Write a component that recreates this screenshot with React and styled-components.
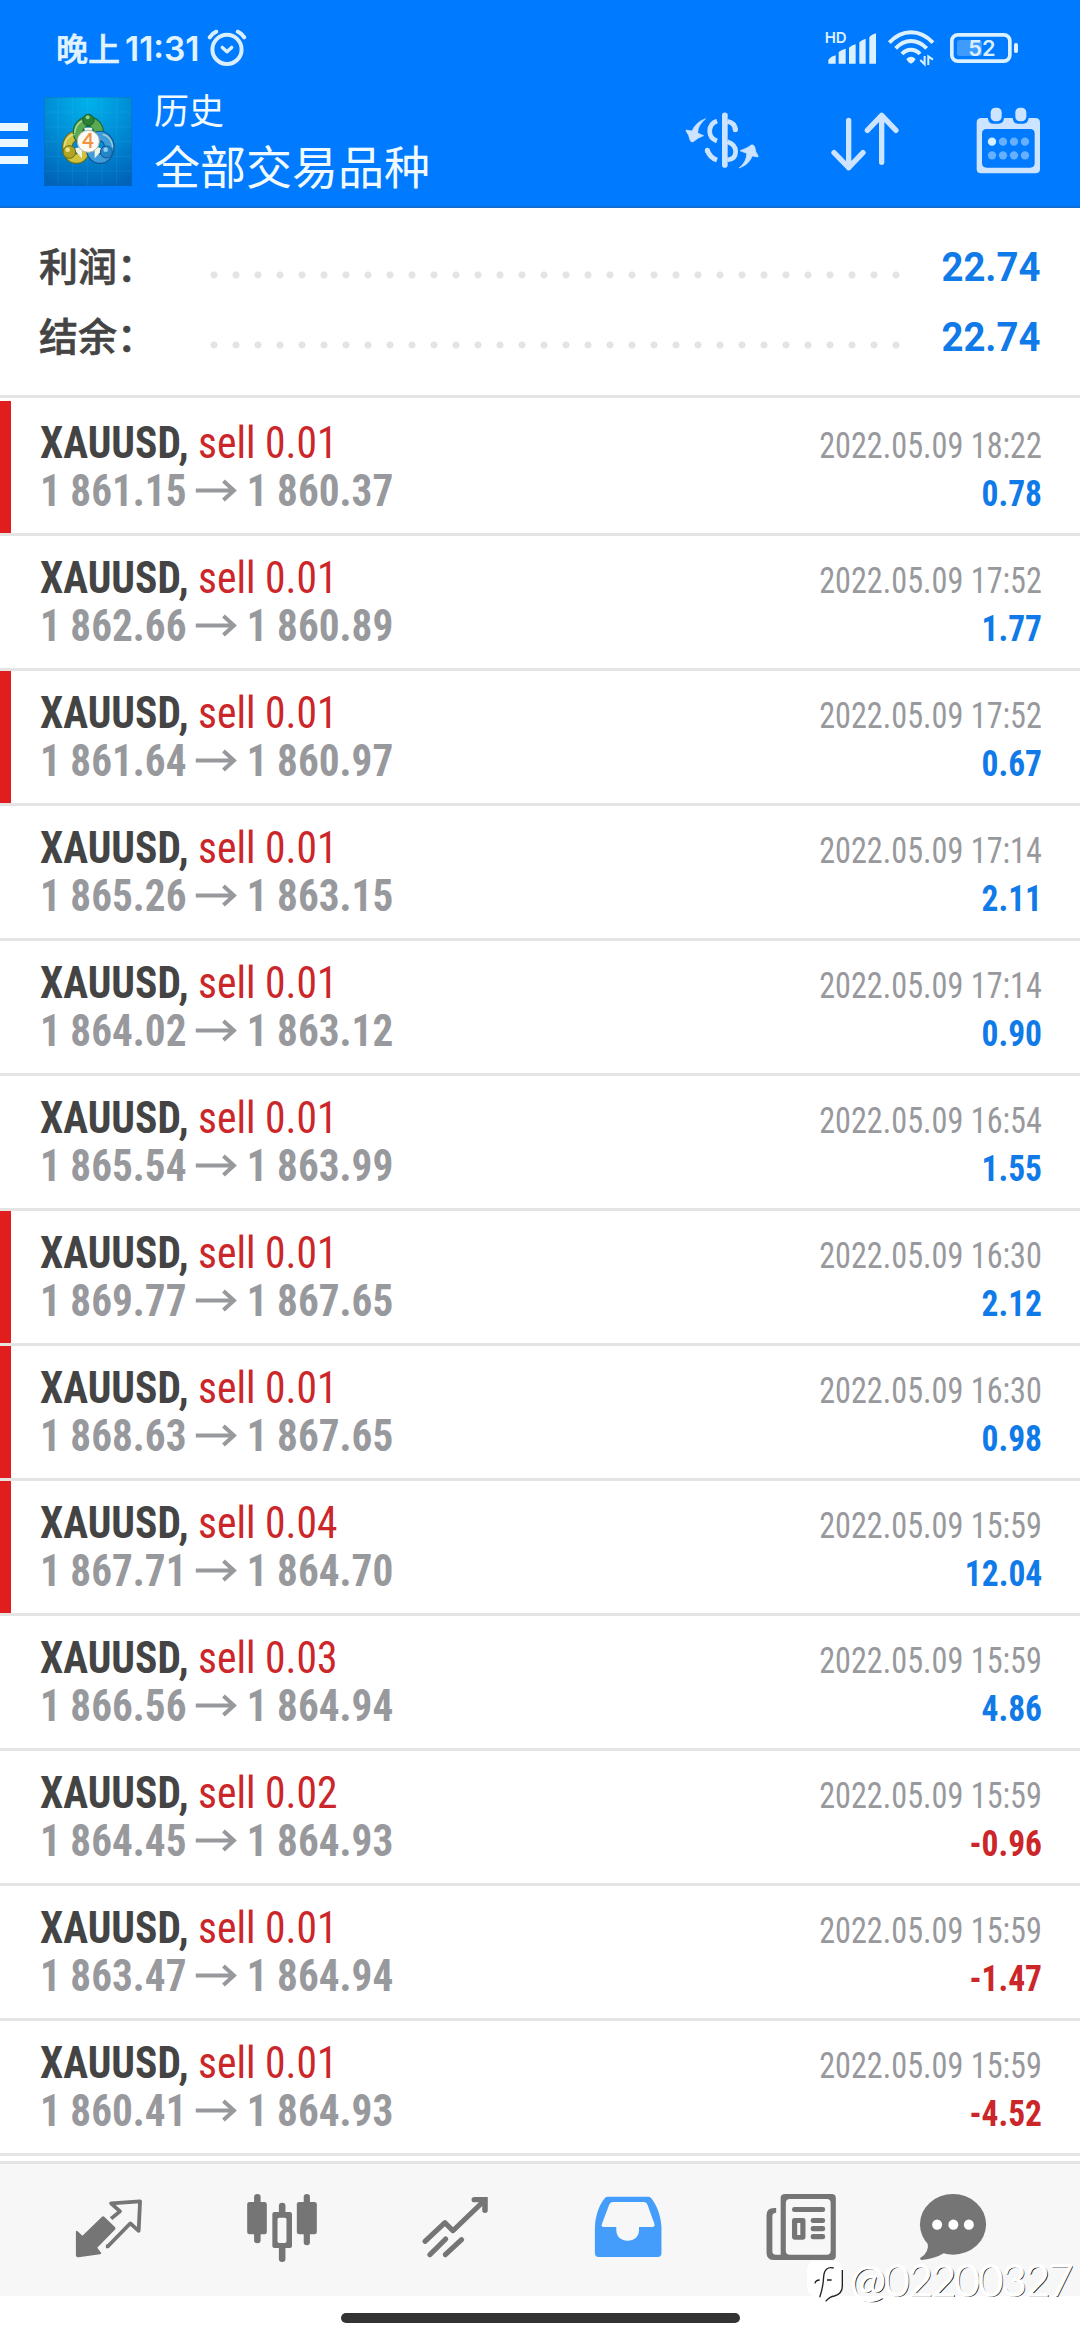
import React from "react";
import styled, { createGlobalStyle } from "styled-components";

const GlobalStyle = createGlobalStyle`
  body {
    margin: 0;
    background: #fff;
  }
`;

const cjk = `"Noto Sans CJK SC", sans-serif`;
const condensed = `"Roboto Condensed", Roboto, sans-serif`;

const Screen = styled.div`
  position: relative;
  width: 1080px;
  height: 2340px;
  overflow: hidden;
  background: #fff;
  font-family: Roboto, ${cjk};

  display: flex;
  flex-flow: column;
`;

const Header = styled.header`
  box-sizing: border-box;
  height: 208px;
  background: #007aff;
  border-bottom: 2px solid #0f6cd2;
`;

const StatusBar = styled.div`
  height: 96px;
  padding: 0 61.5px 0 56px;

  display: flex;
  align-items: center;
`;

const Clock = styled.div`
  margin-top: -1px;
  color: #e0f3ff;

  display: flex;
  align-items: baseline;
`;

const ClockPeriod = styled.span`
  font: 500 32px/48px ${cjk};
  -webkit-text-stroke: 0.6px #e0f3ff;
`;

const ClockTime = styled.span`
  margin-left: 5px;
  font: 600 33.5px/48px Inter, sans-serif;
`;

const StatusIcons = styled.div`
  margin-left: auto;

  display: flex;
  align-items: center;
`;

const StatusIcon = styled.svg`
  display: block;
  overflow: visible;
  width: ${p => p.$w}px;
  height: ${p => p.$h}px;
  margin-left: ${p => p.$gap || 0}px;
  font-family: Inter, sans-serif;
  font-weight: 600;
`;

const AppBar = styled.div`
  height: 90px;
  padding-right: 40px;

  display: flex;
  align-items: center;
`;

const Menu = styled.div`
  width: 27.5px;
  height: 41px;
  margin-top: 4px;

  display: flex;
  flex-flow: column;
  justify-content: space-between;
`;

const MenuBar = styled.span`
  height: 8px;
  background: #eaf7ff;
`;

const Logo = styled.svg`
  display: block;
  width: 88px;
  height: 89px;
  margin-left: 16.5px;
`;

const Titles = styled.div`
  margin: -3px 0 0 22px;
  color: #f1faff;
`;

const Title = styled.div`
  font: 400 35px/50px ${cjk};
`;

const Subtitle = styled.div`
  font: 400 46px/61px ${cjk};
`;

const Actions = styled.div`
  margin: -2px 0 0 auto;

  display: flex;
  align-items: center;
`;

const ActionIcon = styled.svg`
  display: block;
  width: ${p => p.$w}px;
  height: 70px;
  margin-left: ${p => p.$gap || 0}px;
  color: #cce4ff;
`;

const Summary = styled.section`
  padding: 21px 40px 26px 39px;
  border-bottom: 3px solid #e4e4e4;
`;

const SummaryRow = styled.div`
  height: 70px;

  display: flex;
  align-items: center;
`;

const SummaryLabel = styled.div`
  width: 163.5px;
  color: #444;
  font: 500 39px/70px ${cjk};
  -webkit-text-stroke: 0.6px #444;
`;

const DotLeader = styled.div`
  width: 704px;
  height: 8px;
  margin-top: 21px;
  background: radial-gradient(circle at center, #e4e4e4 3.2px, transparent 3.9px) 0 0 / 22px 8px;
`;

/* figures are set a little narrower than the font's own width */
const SummaryValue = styled.div`
  margin-left: auto;
  padding-top: 8px;
  color: #107ae8;
  font: 700 40px/62px Roboto, sans-serif;
  transform: scaleX(0.957);
  transform-origin: right;
`;

const DealList = styled.main`
  padding-top: 3px;
`;

const Deal = styled.div`
  box-sizing: border-box;
  height: 135px;
  border-bottom: 3px solid #e4e4e4;

  display: flex;
`;

const Marker = styled.div`
  width: 11px;
  background: ${p => (p.$on ? "#e11d1d" : "transparent")};
`;

const DealBody = styled.div`
  flex: 1;
  padding: 18px 38px 0 28.5px;
`;

const Line = styled.div`
  height: 48px;
  font: 400 44px/48px ${condensed};

  display: flex;
  align-items: baseline;
  justify-content: space-between;
`;

const Lead = styled.div`
  display: flex;
  align-items: baseline;
  transform: scaleX(${p => p.$scale});
  transform-origin: left;
`;

const DealSymbol = styled.span`
  color: #444;
  font-weight: 700;
  white-space: pre;
`;

const Side = styled.span`
  color: #cb2629;
`;

const Price = styled.span`
  color: #98999d;
  font-weight: 700;
`;

const PriceArrow = styled.svg`
  width: 44.7px;
  height: 24px;
  margin: 0 9.6px 0 10px;
  align-self: center;
  color: #98999d;
`;

const Time = styled.span`
  color: #98999d;
  font-size: 36px;
  transform: scaleX(0.895);
  transform-origin: right;
`;

const Profit = styled.span`
  color: ${p => (p.$loss ? "#cb2629" : "#107ae8")};
  font-size: 36px;
  font-weight: 700;
  transform: scaleX(0.93);
  transform-origin: right;
`;

const TabBar = styled.nav`
  height: 132px;
  margin-top: auto;
  padding-left: 22px;
  background: #f7f7f7;
  border-top: 3px solid #e4e4e4;

  display: grid;
  grid-template-columns: repeat(5, 173px) 131px;
  align-items: center;
  justify-items: center;
`;

const TabIcon = styled.svg`
  display: block;
  width: 80px;
  height: 100px;
  color: ${p => (p.$active ? "#449dfb" : "#757575")};
`;

const HomeArea = styled.div`
  box-sizing: border-box;
  height: 44px;
  padding-top: 17px;

  display: flex;
  justify-content: center;
`;

const HomeIndicator = styled.div`
  width: 399px;
  height: 10px;
  border-radius: 5px;
  background: #333;
`;

const Watermark = styled.div`
  position: absolute;
  right: 8px;
  bottom: 30px;
  color: #fff;
  font: 300 43px/60px Lato, sans-serif;
  letter-spacing: -1.5px;
  -webkit-text-stroke: 1.4px #fff;
  text-shadow: 1.3px 1.3px 0 #222, 0 0 3px #fff, 0 0 2px #fff;

  display: flex;
  align-items: center;
`;

const WatermarkLogo = styled.svg`
  width: 40px;
  height: 44px;
  margin-right: 5px;
`;

const AlarmIcon = () => (
  <StatusIcon $w={40} $h={38} $gap={7} viewBox="0 0 40 38" fill="none" stroke="#d9efff" strokeLinecap="round">
    <circle cx="20" cy="20.4" r="14.6" strokeWidth="4" />
    <path d="M15.3 18.4l4.7 4.4 4.7-4.4" strokeWidth="3.4" strokeLinejoin="round" />
    <path d="M2.7 8.3Q5.3 4.3 9.3 2.7M37.3 8.3Q34.7 4.3 30.7 2.7" strokeWidth="4" />
  </StatusIcon>
);

const SignalIcon = () => (
  <StatusIcon $w={52} $h={40} viewBox="12 22 156 120" fill="#dcf1ff">
    <text x="11" y="68" fontSize="45">HD</text>
    <path d="M22 129V117Q30 107 44 104V129ZM53 129V94Q62 87 74 84V129ZM84 129V81Q92 74 104 71V129ZM115 129V65Q122 57 134 54V129ZM145 129V49Q152 41 165 38V129Z" />
  </StatusIcon>
);

const WifiIcon = () => (
  <StatusIcon $w={49.3} $h={37.33} $gap={10.7} viewBox="200 28 148 112" fill="none" stroke="#dcf1ff">
    <path d="M207 69Q236 38 272 38T338 69" strokeWidth="12" />
    <path d="M226 86Q246 64 272 64T319 86" strokeWidth="12" />
    <path d="M245 103Q256 90 272 90T299 103" strokeWidth="12" />
    <path d="M258 118Q272 105 286 118Q282 128 272 132Q262 128 258 118Z" fill="#dcf1ff" stroke="none" />
    <path d="M313 109V134L300 121M324 136V110L338 120" strokeWidth="6" />
  </StatusIcon>
);

const BatteryIcon = () => (
  <StatusIcon $w={70} $h={32} $gap={12} viewBox="384 33 210 96" fill="#dcf1ff">
    <rect x="408" y="57" width="75" height="48" rx="8" fill="#409bff" />
    <rect x="392.500" y="41.500" width="174" height="79" rx="18" fill="none" stroke="#dcf1ff" strokeWidth="11" />
    <rect x="579" y="66" width="12" height="30" rx="5" />
    <text x="442" y="106" fontSize="65">52</text>
  </StatusIcon>
);

const MetaTraderLogo = () => (
  <Logo viewBox="0 0 264 267" preserveAspectRatio="none">
    <defs>
      <radialGradient id="tile" cx="0.5" cy="0.05" r="1">
        <stop offset="0" stopColor="#00b1ea" />
        <stop offset="0.45" stopColor="#0090d8" />
        <stop offset="1" stopColor="#0063b8" />
      </radialGradient>
    </defs>
    <rect width="264" height="267" fill="url(#tile)" />
    <path
      d="M42 0V267M86 0V267M130 0V267M174 0V267M218 0V267M0 45H264M0 90H264M0 134H264M0 178H264M0 222H264"
      stroke="#5cc8f5"
      strokeOpacity="0.18"
      strokeWidth="2"
    />
    <rect x="1" y="1" width="262" height="265" fill="none" stroke="#0a63b5" strokeOpacity="0.5" strokeWidth="2" />
    <g fill="none">
      <ellipse cx="97" cy="151" rx="27" ry="34" stroke="#66701a" strokeWidth="32" />
      <ellipse cx="97" cy="151" rx="27" ry="34" stroke="#cfc23f" strokeWidth="25" />
      <ellipse cx="133" cy="105" rx="31" ry="31" stroke="#1c6a35" strokeWidth="32" />
      <ellipse cx="133" cy="105" rx="31" ry="31" stroke="#5aaa52" strokeWidth="25" />
      <ellipse cx="168" cy="151" rx="28" ry="34" stroke="#0f5794" strokeWidth="32" />
      <ellipse cx="168" cy="151" rx="28" ry="34" stroke="#3f9cdb" strokeWidth="25" />
      <path
        d="M92 108Q96 71 130 69M60 150Q66 116 92 112M176 112Q202 118 206 150"
        stroke="#e6f3c4"
        strokeOpacity="0.65"
        strokeWidth="4"
      />
    </g>
    <path d="M88 156l26-8v36zM178 156l-26-8v36zM120 92h26l-6 14h-14z" fill="#eef5e8" />
    <circle cx="133" cy="69" r="17" fill="#2b8236" stroke="#1c5a2c" strokeWidth="3" />
    <circle cx="76" cy="165" r="19" fill="#b3a322" stroke="#66701a" strokeWidth="3" />
    <circle cx="187" cy="165" r="18" fill="#2485c7" stroke="#0f5794" strokeWidth="3" />
    <circle cx="131" cy="61" r="6" fill="#93cf8a" />
    <circle cx="71" cy="158" r="7" fill="#ede386" />
    <circle cx="185" cy="158" r="7" fill="#8fcdf0" />
    <circle cx="133" cy="133" r="33" fill="#fbfaf7" stroke="#b9b6a6" strokeWidth="3" />
    <text x="132" y="154" textAnchor="middle" fontFamily="Lato" fontWeight="700" fontSize="60" fill="#f2923c">4</text>
  </Logo>
);

const CurrencyIcon = () => (
  <ActionIcon $w={80} viewBox="126 315 240 210" fill="none" stroke="currentColor">
    <path d="M254.500 346V495" strokeWidth="17" strokeLinecap="round" />
    <path d="M231 363Q209 371 209 393T231 423" strokeWidth="14" />
    <path d="M202 451Q210 473 231 480" strokeWidth="15" />
    <path d="M202 451v1M286 388v1" strokeWidth="15" strokeLinecap="round" />
    <path d="M262 364Q286 369 286 390" strokeWidth="15" />
    <path d="M262 425Q287 433 287 455T262 480" strokeWidth="14" />
    <path
      d="M197 356Q173 376 173 399L191 407Q172 413 160 425Q153 428 150 420Q147 404 138 393V390L156 393Q168 365 197 356ZM297 504Q321 485 320 460L300 452Q322 445 334 435Q341 433 344 440Q346 456 354 467V471L337 468Q326 495 297 504Z"
      fill="currentColor"
      stroke="currentColor"
      strokeWidth="2"
    />
  </ActionIcon>
);

const SortIcon = () => (
  <ActionIcon
    $w={80}
    $gap={63}
    viewBox="555 315 240 210"
    fill="none"
    stroke="currentColor"
    strokeWidth="16"
    strokeLinecap="round"
    strokeLinejoin="round"
  >
    <path d="M626 361V503M582 458L626 503L669 458" />
    <path d="M725 487V346M682 391L725 346L768 391" />
  </ActionIcon>
);

const CalendarIcon = () => (
  <ActionIcon $w={64} $gap={71} viewBox="1008 315 192 210" fill="currentColor">
    <path
      fillRule="evenodd"
      d="M1024 354H1044V356Q1046 371 1060 371H1076Q1091 371 1092 354H1118Q1119 371 1134 371H1150Q1164 371 1166 354H1186Q1200 354 1200 368V507Q1200 520 1186 520H1024Q1010 520 1010 507V368Q1010 354 1024 354ZM1040 387Q1026 387 1026 401V489Q1026 503 1040 503H1170Q1184 503 1184 489V401Q1184 387 1170 387Z"
    />
    <rect x="1052" y="323" width="33" height="41" rx="14" />
    <rect x="1126" y="323" width="33" height="41" rx="14" />
    <circle cx="1056" cy="425" r="12.500" fill="#d5f0ff" />
    {[1089, 1122, 1155].map(x => (
      <circle key={x} cx={x} cy="425" r="12.500" fill="#66b0ff" />
    ))}
    {[1056, 1089, 1122, 1155].map(x => (
      <circle key={x} cx={x} cy="466" r="12.500" fill="#66b0ff" />
    ))}
  </ActionIcon>
);

const QuotesIcon = () => (
  <TabIcon viewBox="199 150 232 300" preserveAspectRatio="none" fill="currentColor">
    <path d="M219 306Q219 300 224 304L238 317L294 261Q298 257 302 261L332 291Q336 295 332 299L281 353L292 368Q294 372 289 373L227 382Q219 382 219 375Z" />
    <path
      d="M321 266L347 244L321 220L405 214L401 303L377 280L312 349L306 349"
      fill="none"
      stroke="currentColor"
      strokeWidth="11"
      strokeLinejoin="round"
    />
  </TabIcon>
);

const ChartIcon = () => (
  <TabIcon viewBox="700 150 232 300" preserveAspectRatio="none" fill="currentColor">
    <rect x="735" y="192" width="19" height="148" rx="9" />
    <rect x="715" y="216" width="57" height="97" rx="7" />
    <rect x="879" y="192" width="18" height="154" rx="9" />
    <rect x="859" y="216" width="58" height="97" rx="7" />
    <rect x="807" y="218" width="19" height="40" rx="9" />
    <rect x="807" y="345" width="19" height="51" rx="9" />
    <path
      fillRule="evenodd"
      d="M794 246H839Q845 246 845 252V348Q845 354 839 354H794Q788 354 788 348V252Q788 246 794 246ZM808 263Q803 263 803 268V334Q803 339 808 339H824Q829 339 829 334V268Q829 263 824 263Z"
    />
  </TabIcon>
);

const TradeIcon = () => (
  <TabIcon
    viewBox="1202 150 232 300"
    preserveAspectRatio="none"
    fill="none"
    stroke="currentColor"
    strokeWidth="15"
    strokeLinecap="round"
  >
    <path d="M1231 334L1289 278L1312 302L1404 211" strokeLinejoin="round" />
    <path d="M1374 209H1405V241" strokeWidth="16" />
    <path d="M1245 374L1291 327M1290 374L1337 329" />
  </TabIcon>
);

const HistoryIcon = () => (
  <TabIcon $active viewBox="138 150 232 300" preserveAspectRatio="none" fill="currentColor">
    <path
      fillRule="evenodd"
      d="M158 290C160 252 172 223 187 204Q190 200 197 200H312Q318 200 321 204C337 225 349 255 351 290V370Q351 381 340 381H169Q158 381 158 370ZM200 223Q203 216 211 216H299Q307 216 310 223L331 283Q332 291 325 291H286V299C286 320 272 332 253 332C234 332 220 320 220 299V291H183Q176 291 178 283Z"
    />
  </TabIcon>
);

const NewsIcon = () => (
  <TabIcon viewBox="641 150 232 300" preserveAspectRatio="none" fill="currentColor">
    <path
      fillRule="evenodd"
      d="M711 192H846Q858 192 858 204V378Q858 390 846 390H679Q657 390 657 368V256Q657 234 679 234H685V248Q674 248 674 259V364Q674 374 683 374H698V204Q698 192 711 192ZM725 207Q713 207 713 219V362Q713 374 725 374H832Q843 374 843 362V219Q843 207 832 207Z"
    />
    <rect x="731" y="231" width="96" height="15" rx="7" />
    <path
      fillRule="evenodd"
      d="M738 264H763Q770 264 770 271V322Q770 329 763 329H738Q731 329 731 322V271Q731 264 738 264ZM746 279V315H755V279Z"
    />
    <rect x="785" y="264" width="42" height="15" rx="7" />
    <rect x="785" y="288" width="42" height="16" rx="7" />
    <rect x="785" y="312" width="42" height="16" rx="7" />
  </TabIcon>
);

const ChatIcon = () => (
  <TabIcon viewBox="1083 150 232 300" preserveAspectRatio="none" fill="currentColor">
    <ellipse cx="1199" cy="283" rx="96" ry="91" />
    <path d="M1125 335Q1132 366 1104 384Q1102 389 1109 390Q1148 386 1172 370L1190 340Z" />
    <ellipse cx="1153" cy="284" rx="14.500" ry="15.500" fill="#fff" />
    <ellipse cx="1200" cy="284" rx="14.500" ry="15.500" fill="#fff" />
    <ellipse cx="1245" cy="284" rx="14.500" ry="15.500" fill="#fff" />
  </TabIcon>
);

const deals = [
  { side: "sell 0.01", open: "1 861.15", close: "1 860.37", time: "18:22", profit: "0.78", marked: true },
  { side: "sell 0.01", open: "1 862.66", close: "1 860.89", time: "17:52", profit: "1.77" },
  { side: "sell 0.01", open: "1 861.64", close: "1 860.97", time: "17:52", profit: "0.67", marked: true },
  { side: "sell 0.01", open: "1 865.26", close: "1 863.15", time: "17:14", profit: "2.11" },
  { side: "sell 0.01", open: "1 864.02", close: "1 863.12", time: "17:14", profit: "0.90" },
  { side: "sell 0.01", open: "1 865.54", close: "1 863.99", time: "16:54", profit: "1.55" },
  { side: "sell 0.01", open: "1 869.77", close: "1 867.65", time: "16:30", profit: "2.12", marked: true },
  { side: "sell 0.01", open: "1 868.63", close: "1 867.65", time: "16:30", profit: "0.98", marked: true },
  { side: "sell 0.04", open: "1 867.71", close: "1 864.70", time: "15:59", profit: "12.04", marked: true },
  { side: "sell 0.03", open: "1 866.56", close: "1 864.94", time: "15:59", profit: "4.86" },
  { side: "sell 0.02", open: "1 864.45", close: "1 864.93", time: "15:59", profit: "-0.96" },
  { side: "sell 0.01", open: "1 863.47", close: "1 864.94", time: "15:59", profit: "-1.47" },
  { side: "sell 0.01", open: "1 860.41", close: "1 864.93", time: "15:59", profit: "-4.52" }
];

const DealRow = ({ deal }) => (
  <Deal>
    <Marker $on={deal.marked} />
    <DealBody>
      <Line>
        <Lead $scale={0.943}>
          <DealSymbol>{"XAUUSD, "}</DealSymbol>
          <Side>{deal.side}</Side>
        </Lead>
        <Time>2022.05.09 {deal.time}</Time>
      </Line>
      <Line>
        <Lead $scale={0.937}>
          <Price>{deal.open}</Price>
          <PriceArrow viewBox="0 0 42 24" preserveAspectRatio="none" fill="none" stroke="currentColor" strokeWidth="4">
            <path d="M0 11.500H38M28 2L38.500 11.500L28 21" />
          </PriceArrow>
          <Price>{deal.close}</Price>
        </Lead>
        <Profit $loss={deal.profit.startsWith("-")}>{deal.profit}</Profit>
      </Line>
    </DealBody>
  </Deal>
);

const App = () => (
  <Screen>
    <GlobalStyle />
    <Header>
      <StatusBar>
        <Clock>
          <ClockPeriod>晚上</ClockPeriod>
          <ClockTime>11:31</ClockTime>
        </Clock>
        <AlarmIcon />
        <StatusIcons>
          <SignalIcon />
          <WifiIcon />
          <BatteryIcon />
        </StatusIcons>
      </StatusBar>
      <AppBar>
        <Menu>
          <MenuBar />
          <MenuBar />
          <MenuBar />
        </Menu>
        <MetaTraderLogo />
        <Titles>
          <Title>历史</Title>
          <Subtitle>全部交易品种</Subtitle>
        </Titles>
        <Actions>
          <CurrencyIcon />
          <SortIcon />
          <CalendarIcon />
        </Actions>
      </AppBar>
    </Header>
    <Summary>
      <SummaryRow>
        <SummaryLabel>利润：</SummaryLabel>
        <DotLeader />
        <SummaryValue>22.74</SummaryValue>
      </SummaryRow>
      <SummaryRow>
        <SummaryLabel>结余：</SummaryLabel>
        <DotLeader />
        <SummaryValue>22.74</SummaryValue>
      </SummaryRow>
    </Summary>
    <DealList>
      {deals.map((deal, index) => (
        <DealRow key={index} deal={deal} />
      ))}
    </DealList>
    <TabBar>
      <QuotesIcon />
      <ChartIcon />
      <TradeIcon />
      <HistoryIcon />
      <NewsIcon />
      <ChatIcon />
    </TabBar>
    <HomeArea>
      <HomeIndicator />
    </HomeArea>
    <Watermark>
      <WatermarkLogo viewBox="0 0 120 132" fill="none" stroke="#222" strokeWidth="4">
        <path d="M32 8H84Q114 8 114 40V80Q114 106 88 112Q74 116 62 128Q64 118 58 114H36Q6 114 6 82V40Q6 8 32 8Z" fill="#fff" stroke="none" />
        <path d="M86 30Q58 24 56 56Q54 90 44 118M30 76Q32 66 44 66M66 66H80" />
        <path d="M112 36V84Q112 108 88 114Q74 116 62 130" />
      </WatermarkLogo>
      @02200327
    </Watermark>
  </Screen>
);

export default App;
